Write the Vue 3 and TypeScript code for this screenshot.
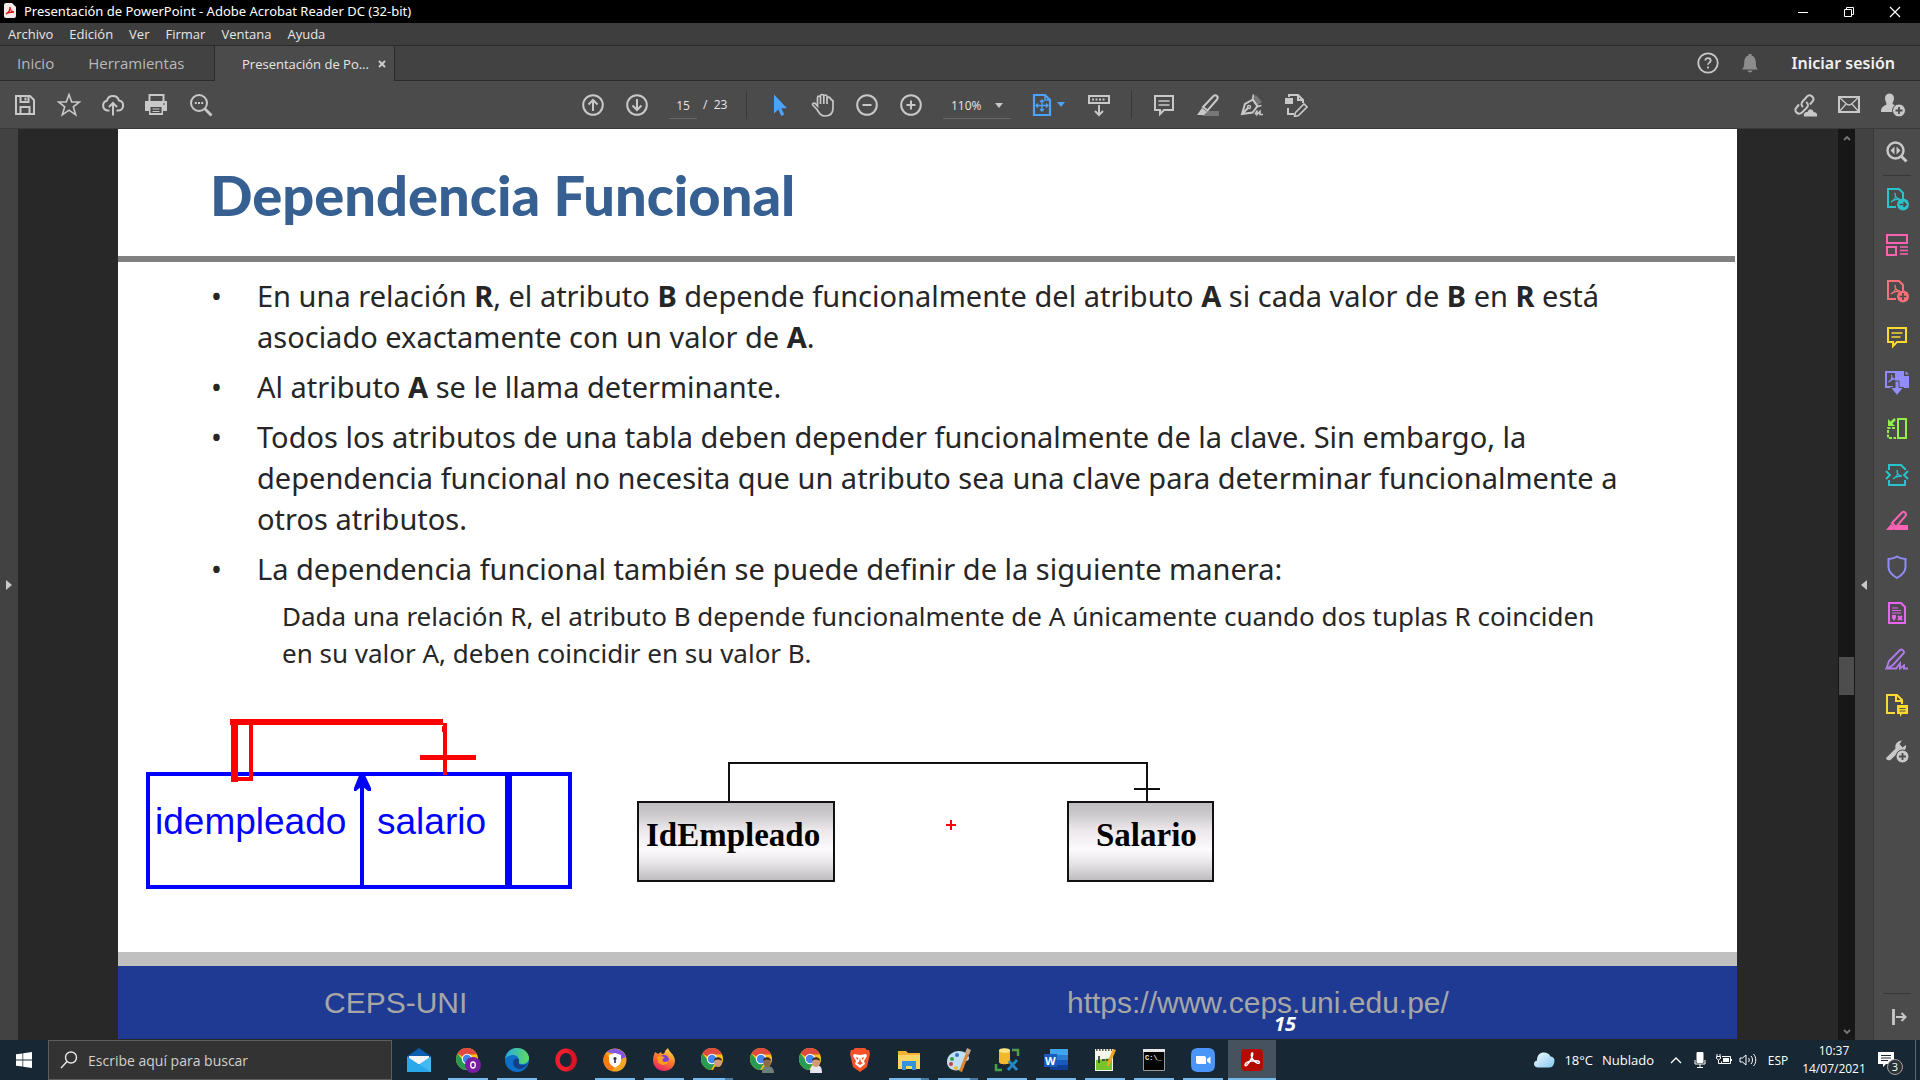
<script setup lang="ts">
import { ref } from 'vue'

const menus: string[] = ['Archivo', 'Edición', 'Ver', 'Firmar', 'Ventana', 'Ayuda']
const page = ref('15')
const zoom = ref('110%')
const query = ref('')

interface TaskApp {
  id: string
  label: string
  open?: boolean
  stacked?: boolean
  active?: boolean
}

const apps: TaskApp[] = [
  { id: 'mail', label: 'Correo' },
  { id: 'chrome-o', label: 'Chrome', open: true },
  { id: 'edge', label: 'Edge', open: true },
  { id: 'opera', label: 'Opera' },
  { id: 'shield', label: 'Navegador seguro', open: true },
  { id: 'firefox', label: 'Firefox', open: true },
  { id: 'chrome-a', label: 'Chrome', open: true, stacked: true },
  { id: 'chrome-b', label: 'Chrome' },
  { id: 'chrome-c', label: 'Chrome' },
  { id: 'brave', label: 'Brave' },
  { id: 'files', label: 'Explorador', open: true, stacked: true },
  { id: 'paint', label: 'Paint', open: true, stacked: true },
  { id: 'sql', label: 'SQL', open: true },
  { id: 'word', label: 'Word', open: true },
  { id: 'notepad', label: 'Notepad++', open: true },
  { id: 'cmd', label: 'Símbolo del sistema', open: true },
  { id: 'zoom', label: 'Zoom', open: true },
  { id: 'acrobat', label: 'Acrobat Reader', open: true, active: true },
]
</script>

<template>
  <div class="app">
    <header class="titlebar">
      <svg class="app-icon" width="12" height="15" viewBox="0 0 12 15">
        <path d="M0 2a2 2 0 0 1 2-2h6l4 4v9a2 2 0 0 1-2 2H2a2 2 0 0 1-2-2z" fill="#f6e9e9" />
        <path d="M2 11c2-1 4-4 4-7 0 3 2 5 4 5-3 0-6 0-8 2z" fill="none" stroke="#e01010" stroke-width="1.3" />
      </svg>
      <span class="window-title">Presentación de PowerPoint - Adobe Acrobat Reader DC (32-bit)</span>
      <div class="window-buttons">
        <button aria-label="Minimizar"><svg width="12" height="12" viewBox="0 0 12 12"><path d="M1 6.5h10" stroke="#fff" /></svg></button>
        <button aria-label="Restaurar"><svg width="12" height="12" viewBox="0 0 12 12" fill="none" stroke="#fff"><path d="M1.500 3.500h7v7h-7zM3.500 3.500v-2h7v7h-2" /></svg></button>
        <button aria-label="Cerrar"><svg width="12" height="12" viewBox="0 0 12 12"><path d="M1 1l10 10M11 1L1 11" stroke="#fff" stroke-width="1.200" /></svg></button>
      </div>
    </header>

    <nav class="menubar">
      <button v-for="m in menus" :key="m">{{ m }}</button>
    </nav>

    <div class="tabs">
      <div class="home-tabs">
        <button>Inicio</button>
        <button>Herramientas</button>
      </div>
      <div class="doc-tab">
        <span>Presentación de Po...</span>
        <button aria-label="Cerrar pestaña"><svg width="8" height="8" viewBox="0 0 8 8"><path d="M1 1l6 6M7 1L1 7" stroke="#d0d0d0" stroke-width="1.800" /></svg></button>
      </div>
      <div class="account">
        <button aria-label="Ayuda">
          <svg width="22" height="22" viewBox="0 0 22 22" fill="none" stroke="#c8c8c8"><circle cx="11" cy="11" r="9.700" stroke-width="1.800" /><path d="M8.300 8.600c0-3.400 5.400-3.400 5.400 0 0 2-2.700 2-2.700 4.200M11 14.500v2" stroke-width="1.800" /></svg>
        </button>
        <button aria-label="Notificaciones">
          <svg width="18" height="20" viewBox="0 0 18 20" fill="#8c8c8c"><path d="M1 16.500c2-2 2-3.500 2.300-8C3.600 4.500 5.500 3 7.500 2.500V1h3v1.500c2 .5 3.900 2 4.200 6 .3 4.500.3 6 2.300 8zM6.500 17.500h5c-.5 2.500-4.500 2.500-5 0z" /></svg>
        </button>
        <a href="#">Iniciar sesión</a>
      </div>
    </div>

    <div class="toolbar">
      <div class="group">
        <button class="tool" aria-label="Guardar"><svg width="24" height="24" viewBox="0 0 24 24"><path d="M3 3h14l4 4v14H3zM7.500 3v6h8V3M12.500 4.500v3M7.500 21v-7h9v7" /></svg></button>
        <button class="tool" aria-label="Favorito"><svg width="24" height="24" viewBox="0 0 24 24"><path d="M12 1.500l2.700 7.500h7.800l-6.200 4.800 2.400 8L12 17.200l-6.700 4.600 2.400-8L1.500 9h7.800z" stroke-width="1.600" /></svg></button>
        <button class="tool" aria-label="Subir"><svg width="24" height="24" viewBox="0 0 24 24"><path d="M8.500 17.500H6.500a5 5 0 0 1-.6-9.800A6.300 6.300 0 0 1 18 7.600a5 5 0 0 1-.5 9.900h-2M12 22.500V10.500M8 14l4-4 4 4" /></svg></button>
        <button class="tool" aria-label="Imprimir"><svg width="24" height="24" viewBox="0 0 24 24"><path d="M4.500 8V2h14v6" /><path d="M0 8h22v10h-4v4H4v-4H0z" fill="#c8c8c8" stroke="none" /><path d="M5.500 14h11v6h-11z" fill="#4b4b4b" stroke="none" /><path d="M7.500 16h7M7.500 18.500h7" stroke-width="1.200" /><path d="M18 11h2" stroke="#4b4b4b" stroke-width="1.200" /></svg></button>
        <button class="tool" aria-label="Buscar"><svg width="24" height="24" viewBox="0 0 24 24"><circle cx="10" cy="10" r="8" /><path d="M16 16l6.500 6.500" stroke-width="2.800" /><path d="M5.800 10h2M9 10h2M12.200 10h2" /></svg></button>
      </div>

      <div class="group center">
        <button class="tool" aria-label="Página anterior"><svg width="24" height="24" viewBox="0 0 24 24"><circle cx="12" cy="12" r="9.800" /><path d="M12 18V7M7.500 11.500L12 7l4.500 4.500" /></svg></button>
        <button class="tool" aria-label="Página siguiente"><svg width="24" height="24" viewBox="0 0 24 24"><circle cx="12" cy="12" r="9.800" /><path d="M12 6v11M7.500 12.500L12 17l4.500-4.500" /></svg></button>
        <input v-model="page" class="page-input" aria-label="Página" />
        <span class="page-total">/&nbsp; 23</span>
        <span class="sep page-sep"></span>
        <button class="tool" aria-label="Seleccionar"><svg width="24" height="24" viewBox="0 0 24 24"><path d="M7 1.500v19l4.300-4 3 6.500 3-1.400-3-6.300h5.700z" fill="#4ba3fb" stroke="none" /></svg></button>
        <button class="tool" aria-label="Mano"><svg width="24" height="24" viewBox="0 0 24 24"><path d="M6 16.500L2 12.300c-1.200-1.600.9-3 2.300-1.800L6.500 13V4.700c0-2 3-2 3 0V11 3c0-2 3.300-2 3.300 0v8V3.500c0-2 3.200-2 3.200 0V11 5.500c.2-1.800 3.200-1.800 3.200 0L22 8v7c0 5-3 8-8 8-4 0-5.500-2.500-8-6.500z" stroke-width="1.700" /></svg></button>
        <button class="tool" aria-label="Alejar"><svg width="24" height="24" viewBox="0 0 24 24"><circle cx="12" cy="12" r="9.800" /><path d="M7.500 12h9" /></svg></button>
        <button class="tool" aria-label="Acercar"><svg width="24" height="24" viewBox="0 0 24 24"><circle cx="12" cy="12" r="9.800" /><path d="M7.500 12h9M12 7.500v9" /></svg></button>
        <div class="zoom-box">
          <select v-model="zoom" aria-label="Zoom">
            <option>110%</option>
            <option>100%</option>
          </select>
          <svg width="8" height="5" viewBox="0 0 8 5"><path d="M0 0h8L4 5z" fill="#c8c8c8" stroke="none" /></svg>
        </div>
        <button class="fit" aria-label="Ajustar página">
          <svg class="accent" width="24" height="24" viewBox="0 0 24 24"><path d="M4 2h11l5 5v15H4z" stroke-width="2.200" /><path d="M15 2v5h5M12 7v11M6.500 12.500h11M10 9l2-2 2 2M10 16l2 2 2-2M8 10.500l-2 2 2 2M16 10.500l2 2-2 2" stroke-width="1.400" /></svg>
          <svg width="8" height="5" viewBox="0 0 8 5"><path d="M0 0h8L4 5z" fill="#4ba3fb" stroke="none" /></svg>
        </button>
        <button class="tool" aria-label="Desplazamiento"><svg width="24" height="24" viewBox="0 0 24 24"><path d="M2 3h20v7H2z" /><path d="M5 6.500h14" stroke-dasharray="2 1.500" /><path d="M12 12v10M8 18l4 4 4-4" /></svg></button>
        <span class="sep edit-sep"></span>
        <button class="tool" aria-label="Comentario"><svg width="24" height="24" viewBox="0 0 24 24"><path d="M3 3h18v14h-9l-4 4v-4H3z" /><path d="M6.500 8h11M6.500 12h11" stroke-width="1.400" /></svg></button>
        <button class="tool" aria-label="Resaltar"><svg width="24" height="24" viewBox="0 0 24 24"><path d="M10 18h13v5H6z" fill="#777" stroke="none" /><path d="M7 14L17.500 3c2.500-2 5.500 1 3.500 3.500L11.500 17.500z" /><path d="M6 15l5 4-3 3H1z" fill="#c8c8c8" stroke="none" /></svg></button>
        <button class="tool" aria-label="Firmar"><svg width="24" height="24" viewBox="0 0 24 24"><path d="M2 21L5 11l8-4.500 4.500 6.500-5 6.500zM2 21l6.500-6.500" /><circle cx="9" cy="14" r="1.500" stroke-width="1.400" /><path d="M13 4l3-2 6 7-4 3z" fill="#777" stroke="none" /><path d="M13.500 1.500l-1 5 5 7 4-1M15 21.500l2-4v4l3-3v3h3" stroke-width="1.600" /></svg></button>
        <button class="tool" aria-label="Editar"><svg width="24" height="24" viewBox="0 0 24 24"><path d="M5 4V2h9l5 5v3M14 2v5h5M4 15v6h6" /><path d="M1 5h8v6H1z" fill="#c8c8c8" stroke="none" /><path d="M11.500 19.500L20 11l3 3-8.500 8.500-4 1z" stroke-width="1.600" /></svg></button>
      </div>

      <div class="group right">
        <button class="tool" aria-label="Compartir vínculo"><svg width="24" height="24" viewBox="0 0 24 24"><path d="M10 14c-2-1.500-2-4 0-6l4-4.500c3-3 8.500 1 5.500 5L17 11.500M13 9c2.500 1.500 2.500 4 .5 6L9 19.500c-3.500 3-9-1-5.500-5L6 11.500" /><path d="M11 23.500c-1-4 2-4.500 3.500-4.500 1-4 5.500-3.500 6 0 3 0 4 2 3.500 4.500z" fill="#c8c8c8" stroke="none" /></svg></button>
        <button class="tool" aria-label="Correo"><svg width="24" height="24" viewBox="0 0 24 24"><path d="M2 4h20v15H2z" /><path d="M2 4l7 6.500c2 2 4 2 6 0L22 4M2 19l7-8M22 19l-7-8" stroke-width="1.300" /></svg></button>
        <button class="tool" aria-label="Invitar"><svg width="26" height="26" viewBox="0 0 26 26"><path d="M5 6c0-6 9-6 9 0 0 3-1.500 4.500-1.500 6l3 1.500V20H1c0-5 2-5.500 5.500-7.500C6.500 10.500 5 9 5 6z" fill="#c8c8c8" stroke="none" /><circle cx="19" cy="18.500" r="6.500" fill="#c8c8c8" stroke="#4b4b4b" stroke-width="1" /><path d="M15.500 18.500h7M19 15v7" stroke="#4b4b4b" stroke-width="1.800" /></svg></button>
      </div>
    </div>

    <main class="workspace">
      <div class="left-rail"><button aria-label="Abrir panel izquierdo"><svg width="6" height="10" viewBox="0 0 6 10"><path d="M0 0l6 5-6 5z" fill="#c8c8c8" /></svg></button></div>

      <div class="document">
        <article class="slide">
          <h1>Dependencia Funcional</h1>
          <div class="rule"></div>
          <ul>
            <li>En una relación <b>R</b>, el atributo <b>B</b> depende funcionalmente del atributo <b>A</b> si cada valor de <b>B</b> en <b>R</b> está<br />asociado exactamente con un valor de <b>A</b>.</li>
            <li>Al atributo <b>A</b> se le llama determinante.</li>
            <li>Todos los atributos de una tabla deben depender funcionalmente de la clave. Sin embargo, la<br />dependencia funcional no necesita que un atributo sea una clave para determinar funcionalmente a<br />otros atributos.</li>
            <li>La dependencia funcional también se puede definir de la siguiente manera:
              <p>Dada una relación R, el atributo B depende funcionalmente de A únicamente cuando dos tuplas R coinciden<br />en su valor A, deben coincidir en su valor B.</p>
            </li>
          </ul>

          <svg class="diagram" viewBox="118 673 1619 279">
            <defs>
              <linearGradient id="metal" x1="0" y1="0" x2="0" y2="1">
                <stop offset="0" stop-color="#bfbdbf" />
                <stop offset="0.150" stop-color="#cbc9cb" />
                <stop offset="0.350" stop-color="#ebe7eb" />
                <stop offset="0.600" stop-color="#fdfafd" />
                <stop offset="0.750" stop-color="#ebe8eb" />
                <stop offset="1" stop-color="#bdbbbd" />
              </linearGradient>
            </defs>
            <g fill="none" stroke="#0000fe" stroke-width="4">
              <path d="M148 774h422v113H148zM362 780v107" />
              <path d="M508.500 774v113" stroke-width="7" />
              <path d="M360 773h4l7 15v3h-3l-6-5-6 5h-2v-3z" fill="#0000fe" stroke="none" />
            </g>
            <g fill="#fe0000">
              <path d="M230 719h213v6H230z" />
              <path d="M231 719h7v63h-7z" />
              <path d="M249 725h4v56h-22v-4h18z" />
              <path d="M443 723h4v52h-4zM442 726h2v6h-2z" />
              <path d="M420 755h56v5h-56z" />
              <path d="M946 824h10v2h-10zM950 820h2v10h-2z" />
            </g>
            <g class="sketch-text">
              <text x="155" y="834">idempleado</text>
              <text x="377" y="834">salario</text>
            </g>
            <g fill="none" stroke="#111" stroke-width="2">
              <path d="M729 802v-39h418v39M1134 789h26" />
              <path d="M638 802h196v79H638zM1068 802h145v79h-145z" fill="url(#metal)" />
            </g>
            <g class="box-text">
              <text x="646" y="846">IdEmpleado</text>
              <text x="1096" y="846">Salario</text>
            </g>
          </svg>

          <div class="band"></div>
          <footer>
            <span>CEPS-UNI</span>
            <span>https://www.ceps.uni.edu.pe/</span>
            <strong class="slide-number">15</strong>
          </footer>
        </article>
      </div>

      <div class="scrollbar">
        <svg width="8" height="6" viewBox="0 0 8 6"><path d="M1 5l3-3 3 3" fill="none" stroke="#777" stroke-width="1.800" /></svg>
        <div class="thumb"></div>
        <svg width="8" height="6" viewBox="0 0 8 6"><path d="M1 1l3 3 3-3" fill="none" stroke="#777" stroke-width="1.800" /></svg>
      </div>
      <div class="right-rail"><button aria-label="Abrir panel derecho"><svg width="6" height="10" viewBox="0 0 6 10"><path d="M6 0L0 5l6 5z" fill="#c8c8c8" /></svg></button></div>

      <aside class="tools">
        <button aria-label="Buscar herramientas"><svg width="24" height="24" viewBox="0 0 24 24" stroke="#c8c8c8"><circle cx="10.500" cy="10.500" r="8" stroke-width="2.400" /><path d="M16.500 16.500l5 5" stroke-width="3" /><path d="M9.500 6.500v8l-4-4zM11.500 6.500v8l4-4z" fill="#c8c8c8" stroke="none" /></svg></button>
        <span class="tools-line"></span>
        <button aria-label="Exportar PDF"><svg width="24" height="24" viewBox="0 0 24 24" stroke="#28c3cd"><path d="M11 20H3V2h11l4 4v6" /><path d="M6 15c4-2 5-6 4-9 0 4 2 6 5 6-3 0-6 0-9 3z" stroke-width="1.300" /><circle cx="18" cy="17.500" r="6" fill="#28c3cd" stroke="none" /><path d="M14.500 17.500h6M18.500 15l2.500 2.500-2.500 2.500" stroke="#4b4b4b" stroke-width="1.700" /></svg></button>
        <button aria-label="Organizar páginas"><svg width="24" height="24" viewBox="0 0 24 24" stroke="#f963b4"><path d="M2 2h20v8H2zM2 14h9v8H2z" /><path d="M15 14h8M15 17.500h8M15 21h8" stroke-width="1.400" /></svg></button>
        <button aria-label="Crear PDF"><svg width="24" height="24" viewBox="0 0 24 24" stroke="#fa7078"><path d="M11 20H3V2h11l4 4v6" /><path d="M6 15c4-2 5-6 4-9 0 4 2 6 5 6-3 0-6 0-9 3z" stroke-width="1.300" /><circle cx="18" cy="17.500" r="6" fill="#fa7078" stroke="none" /><path d="M14.500 17.500h7M18 14v7" stroke="#4b4b4b" stroke-width="1.700" /></svg></button>
        <button aria-label="Comentar"><svg width="24" height="24" viewBox="0 0 24 24" stroke="#fbd92f"><path d="M3 3h18v14h-9l-4 4v-4H3z" /><path d="M6.500 8h11M6.500 12h9" stroke-width="1.600" /></svg></button>
        <button aria-label="Combinar archivos"><svg width="26" height="26" viewBox="0 0 26 26" stroke="#918cf8"><path d="M9 17H2V2h10v10" /><path d="M4.500 12c3-2 4-4 3-7 0 3 2 4 4 4-3 0-5 1-7 3z" stroke-width="1.200" /><path d="M13 1h7v5h5v12H13zM21.500 1L25 4.500h-3.500z" fill="#918cf8" stroke="none" /><path d="M11 11h4v6.500h4.500L13 25.500l-6.500-8H11z" fill="#918cf8" stroke="#4b4b4b" stroke-width="1" /></svg></button>
        <button aria-label="Recortar"><svg width="24" height="24" viewBox="0 0 24 24" stroke="#92f04a"><path d="M13 2h8v19h-8z" /><path d="M10 11H3v10h8" stroke-dasharray="3 1.500" /><path d="M10 2L5 7" stroke-width="2.500" /><path d="M3 2v7h7z" fill="#92f04a" stroke="none" /></svg></button>
        <button aria-label="Comprimir"><svg width="24" height="24" viewBox="0 0 24 24" stroke="#28c3cd"><path d="M4 7V2h12l4 4v1M4 17v5h16v-5M1 8l4 4-4 4M23 8l-4 4 4 4" /><path d="M8 16c4-2 5-6 4-9 0 4 2 6 5 6-3 0-6 0-9 3z" stroke-width="1.300" /></svg></button>
        <button aria-label="Censurar"><svg width="24" height="24" viewBox="0 0 24 24" stroke="#f963b4"><path d="M7 14L17 3.500c2-2 5 1 3.500 3.500L11 18z" /><path d="M6 15l5 4-3 2H1zM12 16h11v5H9z" fill="#f963b4" stroke="none" /></svg></button>
        <button aria-label="Proteger"><svg width="24" height="24" viewBox="0 0 24 24" stroke="#918cf8"><path d="M12 1.500c3 2 5 2.500 8.500 2.500v8c0 5-4 8.500-8.500 11-4.500-2.500-8.500-6-8.500-11V4C7 4 9 3.500 12 1.500z" /></svg></button>
        <button aria-label="Preparar formulario"><svg width="24" height="24" viewBox="0 0 24 24" stroke="#e765f0"><path d="M4 2h12l4 4v16H4z" /><path d="M7 7h6M7 9.500h9M7 12h9" stroke-width="1.200" /><path d="M7 14h4v3l-2 3-2-3z" fill="#e765f0" stroke="none" /><path d="M13 15l4 4M17 15l-4 4" /></svg></button>
        <button aria-label="Rellenar y firmar"><svg width="24" height="24" viewBox="0 0 24 24" stroke="#b07be8"><path d="M1.500 21.500L4 14 15 3c2-1.500 5 1.500 3.500 3.500L8 18l-6 3.500h9l4-5v5l4-3v3h4" stroke-width="1.900" /></svg></button>
        <button aria-label="Enviar para comentarios"><svg width="24" height="24" viewBox="0 0 24 24" stroke="#fbd92f"><path d="M10 20H2V2h10l5 5v4M11 2v6h6" /><path d="M12 12h11v9h-6l-2 3v-3h-3z" fill="#fbd92f" stroke="none" /><path d="M14.500 15.500h6M14.500 18h6" stroke="#4b4b4b" stroke-width="1.200" /></svg></button>
        <button aria-label="Más herramientas"><svg width="24" height="24" viewBox="0 0 24 24" stroke="#c8c8c8"><path d="M1.500 18.500l9-9c-1-4 2-8 6.500-8L14.500 5l3 3.500L21 6c1 4-3 8-7 7l-8 7.500c-2 2-6 0-4.500-2z" fill="#c8c8c8" stroke="none" /><circle cx="17.500" cy="17.500" r="6.500" fill="#c8c8c8" stroke="#4b4b4b" stroke-width="1" /><path d="M14 17.500h7M17.500 14v7" stroke="#4b4b4b" stroke-width="1.800" /></svg></button>
        <span class="tools-line last"></span>
        <button aria-label="Contraer"><svg width="24" height="24" viewBox="0 0 24 24" stroke="#c8c8c8"><path d="M8.500 4v16" stroke-width="2.800" /><path d="M11 12h9M16.500 8l4 4-4 4" /></svg></button>
      </aside>
    </main>

    <div class="taskbar">
      <button class="start" aria-label="Inicio"><svg width="16" height="16" viewBox="0 0 16 16" fill="#fff"><path d="M0 2.300l6.500-.9v6.200H0zM7.200 1.300L16 0v7.600H7.200zM0 8.400h6.500v6.200L0 13.700zM7.200 8.400H16V16l-8.800-1.300z" /></svg></button>
      <label class="search">
        <svg width="18" height="18" viewBox="0 0 18 18" fill="none" stroke="#e8e8e8" stroke-width="1.400"><circle cx="11" cy="6.500" r="5.500" /><path d="M7 10.500L1 17" /></svg>
        <input v-model="query" aria-label="Buscar" placeholder="Escribe aquí para buscar" />
      </label>
      <div class="apps">
        <button v-for="a in apps" :key="a.id" :aria-label="a.label" :class="{ open: a.open, stacked: a.stacked, active: a.active }">
          <svg v-if="a.id === 'mail'" width="24" height="24" viewBox="0 0 24 24"><path d="M0 8.500L12 0l12 8.500V23H0z" fill="#0a5fb0" /><path d="M2 8h20v8H2z" fill="#f4f4f4" /><path d="M0 8.500l12 8 12-8V24H0z" fill="#29a9ea" /><path d="M0 8.500L24 24V8.500l-12 8z" fill="#54c8f8" opacity=".6" /></svg>
          <svg v-else-if="a.id.startsWith('chrome')" width="26" height="26" viewBox="0 0 26 26">
            <circle cx="12" cy="12" r="11" fill="#fbc116" /><path d="M12 12L2.500 6.500A11 11 0 0 1 22 7.500H12z" fill="#de4b3e" /><path d="M2.500 6.500A11 11 0 0 0 11 23l5-8.500-8-1z" fill="#279b52" />
            <circle cx="12" cy="12" r="5.200" fill="#fff" /><circle cx="12" cy="12" r="4.200" fill="#4384ee" />
            <template v-if="a.id === 'chrome-o'"><circle cx="18" cy="18" r="8" fill="#7a1ea1" /><ellipse cx="18" cy="18" rx="2.300" ry="3" fill="none" stroke="#fff" stroke-width="1.300" /></template>
            <template v-else><path :d="a.id === 'chrome-c' ? 'M12 26c0-6 2-8 6-8s6 2 6 8z' : 'M13 26c0-6 2-7 5-7s7 1 7 7z'" :fill="a.id === 'chrome-a' ? '#26282c' : a.id === 'chrome-b' ? '#708078' : '#e6e6f0'" /><ellipse cx="18" cy="15.500" rx="3.800" ry="4.500" :fill="a.id === 'chrome-b' ? '#8a6a4a' : '#d39a78'" /><path d="M14 14c0-5 8-5 8 0-2-2-6-2-8 0z" fill="#30261f" /></template>
          </svg>
          <svg v-else-if="a.id === 'edge'" width="24" height="24" viewBox="0 0 24 24"><defs><linearGradient id="edgeTop"><stop offset="0" stop-color="#2aa8e4" /><stop offset="1" stop-color="#5ddc62" /></linearGradient></defs><circle cx="12" cy="12" r="12" fill="#0d6fc8" /><path d="M0 11C1 4 6 0 12 0c7 0 12 5 12 10 0 4-3 6-7 6-3 0-4-1-3-3 0-4-3-6-6-6S1 9 0 11z" fill="url(#edgeTop)" /><path d="M14 13c-1 2 0 4 3 4 2 0 4 0 6-2-2 4-5 6-9 6-5-1-7-5-5-9 2-3 6-1 5 1z" fill="#123f86" /></svg>
          <svg v-else-if="a.id === 'opera'" width="24" height="24" viewBox="0 0 24 24"><ellipse cx="12" cy="12" rx="8.500" ry="9.300" fill="none" stroke="#f11c2c" stroke-width="4.500" /><path d="M12 .5a11.500 11.500 0 0 1 0 23c6-2 6-21 0-23z" fill="#bb1420" opacity=".5" /></svg>
          <svg v-else-if="a.id === 'shield'" width="24" height="24" viewBox="0 0 24 24"><circle cx="12" cy="12" r="11.500" fill="#f4a521" /><path d="M4 4a11.500 11.500 0 0 1 19 5l-7 3-4-6z" fill="#8456e8" /><path d="M3 5a11 11 0 0 0 6 18l4-7-7-6z" fill="#f77a12" /><path d="M12 5l6 2v5c0 4-3 6-6 7.500C9 18 6 16 6 12V7z" fill="#fff" /><circle cx="12" cy="10.500" r="1.600" fill="#34384c" /><path d="M11.200 11h1.600v4h-1.600z" fill="#34384c" /></svg>
          <svg v-else-if="a.id === 'firefox'" width="24" height="24" viewBox="0 0 24 24"><defs><linearGradient id="fox" x1=".8" y1="0" x2=".3" y2="1"><stop offset="0" stop-color="#ffe14a" /><stop offset=".5" stop-color="#ff7a28" /><stop offset="1" stop-color="#e8206a" /></linearGradient></defs><path d="M3 4l3 2 3-2 1 2c2 0 3-1 3-3l3-3c1 4 6 6 7 12 0 7-5 11-11 11S1 18.500 1 12c0-3 1-5 2-8z" fill="url(#fox)" /><circle cx="12" cy="12" r="5" fill="#7a3fd8" /><path d="M5 9c3-2 6-1 8 1-3 0-3 3-1 4 3 0 4-1 5-2 0 5-7 7-11 2z" fill="#ff9a25" /></svg>
          <svg v-else-if="a.id === 'brave'" width="24" height="24" viewBox="0 0 24 24"><path d="M7 0h10l2 2h2l1 4-1 4-2 9-7 5-7-5-2-9-1-4 1-4h2z" fill="#f4502a" /><path d="M6 6l6 1 6-1 1 2-3 5 1 3-5 4-5-4 1-3-3-5z" fill="#fff" /><path d="M7.500 9l3 1-1 2zM16.500 9l-3 1 1 2zM12 10l1 4 2 1-3 2-3-2 2-1z" fill="#f4502a" /></svg>
          <svg v-else-if="a.id === 'files'" width="24" height="24" viewBox="0 0 24 24"><path d="M1 3h8l2 2h12v16H1z" fill="#f3b234" /><path d="M1 7h22v14H1z" fill="#fbd667" /><path d="M5 22v-9h14v9h-4v-4H9v4z" fill="#3493dc" /></svg>
          <svg v-else-if="a.id === 'paint'" width="26" height="26" viewBox="0 0 26 26"><path d="M2 15C2 8 8 4 14 4c5 0 10 3 10 7 0 3-3 3-5 4-2 2 1 4-1 6-6 5-16 2-16-6z" fill="#bfe0f2" /><circle cx="7" cy="12" r="2" fill="#3a9a44" /><circle cx="12" cy="8" r="2" fill="#3772c8" /><circle cx="6" cy="17" r="2" fill="#dd3a35" /><circle cx="11" cy="21" r="2" fill="#f0bc28" /><path d="M14 24L21 6l3 1-7 18z" fill="#de8432" /><path d="M20 6l2-5 4 2-2 5z" fill="#c6a585" /></svg>
          <svg v-else-if="a.id === 'sql'" width="26" height="26" viewBox="0 0 26 26"><path d="M5 4c0-3 11-3 11 0v11c0 3-11 3-11 0z" fill="#f0b92c" /><ellipse cx="10.500" cy="3.500" rx="5.500" ry="2.300" fill="#fbe382" /><path d="M18 3h6v6M2 17v6h6" fill="none" stroke="#4aa148" stroke-width="2.500" /><path d="M15 14l8 9M23 13l-9 10" stroke="#2387c8" stroke-width="2.800" /></svg>
          <svg v-else-if="a.id === 'word'" width="24" height="24" viewBox="0 0 24 24"><path d="M6 1h18v6H6z" fill="#41a5ee" /><path d="M6 7h18v5H6z" fill="#2b7cd3" /><path d="M6 12h18v5H6z" fill="#185abd" /><path d="M6 17h18v5H6z" fill="#103f91" /><path d="M0 6h13v13H0z" fill="#185abd" /><text x="1" y="16.500" font-family="Open Sans, sans-serif" font-size="11" font-weight="700" fill="#fff">W</text></svg>
          <svg v-else-if="a.id === 'notepad'" width="24" height="24" viewBox="0 0 24 24"><path d="M2 1h18v22H2z" fill="#f4f6ea" /><path d="M3 12l16-2v12H3z" fill="#76c42c" /><path d="M3 2h16" stroke="#555" stroke-width="2" stroke-dasharray="1.500 1.500" /><path d="M6 8v7M9 12h3M13 12h3" stroke="#333" stroke-width="1.600" /><path d="M20 1l3 1-6 14-3 3v-4z" fill="#efa622" /></svg>
          <svg v-else-if="a.id === 'cmd'" width="24" height="24" viewBox="0 0 24 24"><path d="M1.500 1.500h21v21h-21z" fill="#050505" stroke="#9a9a9a" /><path d="M1 1h22v3H1z" fill="#e6e6e6" /><text x="3" y="12" font-family="Liberation Mono, monospace" font-size="7" font-weight="700" fill="#eee">C:\_</text></svg>
          <svg v-else-if="a.id === 'zoom'" width="24" height="24" viewBox="0 0 24 24"><path d="M0 8c0-6 2-8 8-8h8c6 0 8 2 8 8v8c0 6-2 8-8 8H8c-6 0-8-2-8-8z" fill="#4a96f8" /><path d="M5 8h8c1.500 0 2 1 2 2v6H7c-1.500 0-2-1-2-2zM16 11l3.500-2.500v7.500L16 13.500z" fill="#fff" /></svg>
          <svg v-else width="22" height="22" viewBox="0 0 22 22"><rect width="22" height="22" rx="4" fill="#b30b00" /><path d="M4 16c0-3 7-5 13-4 3 1 1 3-1 2-4-2-7-7-5-10 2-1 0 7-5 12-1 1-2 1-2 0z" fill="none" stroke="#fff" stroke-width="1.400" /></svg>
        </button>
      </div>

      <div class="tray">
        <a href="#" class="weather">
          <svg width="22" height="16" viewBox="0 0 22 16"><defs><linearGradient id="sky" x1="0" y1="0" x2="1" y2="1"><stop offset="0" stop-color="#f4fbff" /><stop offset="1" stop-color="#85c7f0" /></linearGradient></defs><path d="M4.500 15.500C0 15 0 9 4 8.500 4 3 7 .5 11 .5c3 0 5 1 6.500 4C22 5 22 9 21 11.500c-1 3-2.500 4-5 4z" fill="url(#sky)" /></svg>
          <span>18°C</span><span>Nublado</span>
        </a>
        <button class="chev" aria-label="Iconos ocultos"><svg width="12" height="8" viewBox="0 0 12 8"><path d="M1 7l5-5 5 5" fill="none" stroke="#fff" stroke-width="1.300" /></svg></button>
        <button aria-label="Micrófono"><svg width="12" height="16" viewBox="0 0 12 16"><rect x="2.500" y="0" width="7" height="11" rx="1" fill="#fff" /><path d="M1 8v4h10V8M6 12v3M3 15.500h6" fill="none" stroke="#fff" /></svg></button>
        <button aria-label="Batería"><svg width="16" height="14" viewBox="0 0 16 14" fill="none" stroke="#fff"><path d="M6 3.500h8.500v7h-9v-2M15.500 6v2M1 1v2M4 1v2M.5 3.500h4v2l-2 1.500-2-1.500zM2.500 7v3.500h3" /><path d="M7 5h6v4H7z" fill="#fff" stroke="none" /></svg></button>
        <button aria-label="Volumen"><svg width="18" height="14" viewBox="0 0 18 14" fill="none" stroke="#fff"><path d="M1 5h2.500L7 2v10L3.500 9H1zM9.500 5c1 1 1 3 0 4M12 3c2 2 2 6 0 8M14.500 1c3 3 3 9 0 12" /></svg></button>
        <button class="lang">ESP</button>
        <div class="clock"><span>10:37</span><span>14/07/2021</span></div>
        <button class="notices" aria-label="3 notificaciones">
          <svg width="16" height="16" viewBox="0 0 16 16"><path d="M0 0h16v12H8l-3 3v-3H0z" fill="#fff" /><path d="M3 3.500h10M3 6h10M3 8.500h7" stroke="#1a2733" /></svg>
          <span class="badge">3</span>
        </button>
      </div>
    </div>
  </div>
</template>

<style>
body {
  margin: 0;
  background: #282828;
}
</style>

<style scoped>
.app {
  min-height: 100vh;
  display: flex;
  flex-direction: column;
  font-family: 'Open Sans', 'Noto Sans', sans-serif;
  font-size: 13px;
  color: #e6e6e6;
}
button,
input,
select {
  font: inherit;
  color: inherit;
  background: none;
  border: 0;
  padding: 0;
  margin: 0;
}
a {
  color: inherit;
  text-decoration: none;
}
svg {
  display: block;
  flex: none;
}
.titlebar {
  height: 23px;
  background: #000;
  display: flex;
  align-items: center;
  color: #fff;
  font-family: 'Noto Sans', sans-serif;
}
.app-icon {
  margin: 0 8px 2px 4px;
}
.window-title {
  line-height: 23px;
  white-space: nowrap;
}
.window-buttons {
  margin-left: auto;
  display: flex;
  padding-right: 2px;
}
.window-buttons button {
  width: 46px;
  height: 20px;
  display: grid;
  place-items: center;
}
.menubar {
  height: 22px;
  background: #3e3e3e;
  border-bottom: 1px solid #2b2b2b;
  display: flex;
  gap: 16px;
  padding-left: 8px;
}
.tabs {
  height: 35px;
  background: #424242;
  display: flex;
}
.home-tabs {
  display: flex;
  gap: 34px;
  width: 197px;
  padding-left: 17px;
  border-right: 1px solid #2b2b2b;
  border-bottom: 1px solid #2b2b2b;
  color: #b8b8b8;
  font-size: 15px;
}
.doc-tab {
  width: 152px;
  padding-left: 27px;
  display: flex;
  align-items: center;
  gap: 9px;
  background: #4b4b4b;
  border-right: 1px solid #2b2b2b;
  white-space: nowrap;
}
.account {
  flex: 1;
  display: flex;
  align-items: center;
  justify-content: flex-end;
  gap: 22px;
  padding-right: 25px;
  border-bottom: 1px solid #2b2b2b;
  font-family: 'Noto Sans', sans-serif;
  font-size: 16px;
  font-weight: 600;
}
.account a {
  margin-left: 11px;
  line-height: 34px;
  color: #f0f0f0;
}
.toolbar {
  height: 47px;
  display: grid;
  grid-template-columns: 1fr auto 1fr;
  background: #4b4b4b;
  border-bottom: 1px solid #3a3a3a;
}
.group {
  display: flex;
  align-items: center;
  padding-left: 3px;
}
.group.center {
  padding: 0 31px 0 0;
}
.group.right {
  justify-content: flex-end;
  padding-right: 5px;
}
.toolbar svg {
  fill: none;
  stroke: #c8c8c8;
  stroke-width: 2;
}
.toolbar .accent {
  stroke: #4ba3fb;
}
.tool {
  width: 44px;
  height: 40px;
  display: grid;
  place-items: center;
}
.page-input {
  width: 28px;
  height: 26px;
  margin: 2px 6px 0 10px;
  text-align: center;
  border-bottom: 1px solid #686868;
}
.page-input,
.page-total,
.zoom-box {
  font-size: 12px;
}
.page-total {
  width: 24px;
  white-space: nowrap;
}
.sep {
  width: 1px;
  height: 28px;
  background: #383838;
}
.page-sep {
  margin: 0 10px 0 19px;
}
.edit-sep {
  margin: 0 10px;
}
.zoom-box {
  width: 60px;
  height: 26px;
  margin: 2px 0 0 10px;
  padding-left: 8px;
  display: flex;
  align-items: center;
  border-bottom: 1px solid #686868;
}
.zoom-box select {
  width: 44px;
  appearance: none;
}
.fit {
  width: 36px;
  margin: 0 11px 0 19px;
  display: flex;
  align-items: center;
  gap: 3px;
}
.workspace {
  flex: 1;
  display: flex;
  background: #282828;
}
.left-rail,
.right-rail {
  display: flex;
  align-items: center;
  justify-content: center;
  background: #424242;
}
.left-rail {
  width: 18px;
}
.right-rail {
  width: 18px;
  border-right: 1px solid #3a3a3a;
}
.document {
  flex: 1;
  padding: 0 101px 1px 100px;
}
.slide {
  background: #fff;
  color: #262626;
  font-family: 'Noto Sans', 'Open Sans', sans-serif;
}
h1 {
  margin: 0;
  padding: 34px 92px 29px;
  line-height: 64px;
  font-family: Lato, 'Open Sans', sans-serif;
  font-size: 56px;
  font-weight: 900;
  color: #366092;
}
.rule {
  height: 6px;
  margin-right: 2px;
  background: #808080;
}
ul {
  margin: 0;
  padding: 13px 0 1px 139px;
  list-style: none;
  font-size: 29px;
  line-height: 41px;
  white-space: nowrap;
}
li {
  position: relative;
  margin-bottom: 9px;
}
li:last-child {
  margin-bottom: 0;
}
li::before {
  content: '•';
  position: absolute;
  left: -46px;
}
p {
  margin: 9px 0 0 25px;
  font-size: 26px;
  line-height: 37px;
}
.diagram {
  width: 100%;
  height: auto;
}
.sketch-text {
  font: 37px 'Liberation Sans', Arial, sans-serif;
  fill: #0000fe;
}
.box-text {
  font: bold 33px 'Liberation Serif', 'Times New Roman', serif;
  fill: #000;
}
.band {
  height: 14px;
  background: #c0c0c0;
}
footer {
  position: relative;
  height: 73px;
  padding-left: 206px;
  display: grid;
  grid-template-columns: 743px auto;
  background: #1f3a93;
  color: #a6a6a6;
  font: 30px/74px 'Liberation Sans', Arial, sans-serif;
}
.slide-number {
  position: absolute;
  left: 1156px;
  bottom: 3px;
  color: #fff;
  font: italic bold 20px/24px 'Open Sans', sans-serif;
}
.scrollbar {
  width: 17px;
  display: flex;
  flex-direction: column;
  align-items: center;
  justify-content: space-between;
  padding: 6px 0 5px;
  box-sizing: border-box;
  background: #171717;
}
.thumb {
  width: 15px;
  height: 38px;
  margin-top: 182px;
  background: #4d4d4d;
}
.tools {
  width: 46px;
  display: flex;
  flex-direction: column;
  background: #4b4b4b;
}
.tools button {
  height: 46px;
  display: grid;
  place-items: center;
}
.tools svg {
  fill: none;
  stroke-width: 2;
}
.tools-line {
  width: 28px;
  height: 1px;
  margin: 0 auto;
  background: #383838;
}
.tools-line.last {
  margin-top: auto;
}
.taskbar {
  height: 40px;
  display: flex;
  background: #182734;
  color: #fff;
}
.start {
  width: 48px;
  display: grid;
  place-items: center;
}
.search {
  width: 344px;
  box-sizing: border-box;
  display: flex;
  align-items: center;
  gap: 10px;
  padding-left: 11px;
  background: #333;
  border: 1px solid #5e5e5e;
  font-size: 14px;
}
.search input {
  flex: 1;
  outline: 0;
}
.search input::placeholder {
  color: #d0d0d0;
  opacity: 1;
}
.apps {
  display: flex;
  gap: 1px;
  padding-left: 3px;
}
.apps button {
  width: 48px;
  height: 40px;
  display: grid;
  place-items: center;
  background-repeat: no-repeat;
  background-position: 4px 38px;
  background-size: 40px 2px;
}
.apps .open {
  background-image: linear-gradient(#76b9ed, #76b9ed);
}
.apps .stacked {
  background-image: linear-gradient(90deg, #76b9ed 32px, #4b7ba2 32px);
}
.apps .active {
  background-color: #46525d;
  background-position: 0 38px;
  background-size: 48px 2px;
}
.tray {
  margin: 0 4px 0 auto;
  display: flex;
  align-items: center;
  border-right: 1px solid #5c6872;
  font-size: 12px;
}
.tray button {
  width: 24px;
  height: 40px;
  display: grid;
  place-items: center;
}
.weather {
  display: flex;
  align-items: center;
  gap: 9px;
  font-size: 13px;
}
.tray .chev {
  margin-left: 10px;
}
.tray .lang {
  width: 34px;
  margin-left: 1px;
}
.clock {
  width: 70px;
  margin-left: 4px;
  display: flex;
  flex-direction: column;
  align-items: center;
  line-height: 18px;
}
.tray .notices {
  position: relative;
  width: 34px;
  margin-right: 12px;
}
.badge {
  position: absolute;
  left: 18px;
  top: 19px;
  width: 14px;
  height: 14px;
  border: 1px solid #a0a0a0;
  border-radius: 50%;
  background: #2b3238;
  font-size: 11px;
  line-height: 14px;
}
</style>
